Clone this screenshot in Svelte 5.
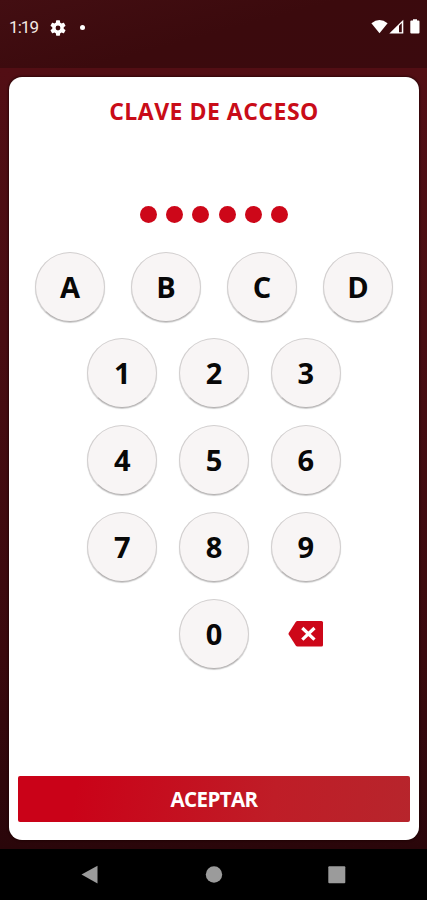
<script>
  const letters = ['A', 'B', 'C', 'D'];
  const rows = [['1', '2', '3'], ['4', '5', '6'], ['7', '8', '9']];
</script>

<div class="screen">
  <header>
    <div class="left">
      <span class="time">1:19</span>
      <svg class="gear" width="16" height="16" viewBox="2 2 20 20"><path fill="#fff" fill-rule="evenodd" d="M19.14 12.94c.04-.3.06-.61.06-.94 0-.32-.02-.64-.07-.94l2.03-1.58a.49.49 0 0 0 .12-.61l-1.92-3.32a.49.49 0 0 0-.59-.22l-2.39.96a7 7 0 0 0-1.62-.94l-.36-2.54a.48.48 0 0 0-.48-.41h-3.84a.48.48 0 0 0-.47.41l-.36 2.54a7.4 7.4 0 0 0-1.62.94l-2.39-.96a.48.48 0 0 0-.59.22L2.74 8.87a.48.48 0 0 0 .12.61l2.03 1.58a7 7 0 0 0 0 1.88l-2.03 1.58a.49.49 0 0 0-.12.61l1.92 3.32c.12.22.37.29.59.22l2.39-.96c.5.38 1.03.7 1.62.94l.36 2.54c.05.24.24.41.48.41h3.84c.24 0 .44-.17.47-.41l.36-2.54a7.4 7.4 0 0 0 1.62-.94l2.39.96c.22.08.47 0 .59-.22l1.92-3.32a.48.48 0 0 0-.12-.61zM12 15a3 3 0 1 1 0-6 3 3 0 0 1 0 6z"/></svg>
      <i class="notice"></i>
    </div>
    <svg class="signals" width="50" height="16" viewBox="0 0 50 16" fill="#fff">
      <path d="M.4 4.2Q8.500-2.200 16.600 4.200L8.500 14.200Z"/>
      <path fill-rule="evenodd" d="M18.300 14.600 32.300.7V14.600ZM28 6.800V13.200H30.800V4Z"/>
      <path d="M28 6.800V13.200H26.800V8Z" opacity=".7"/>
      <path d="M40.300 1.500H42V.3h4v1.200h1.500q1 0 1 1V13.600q0 1-1 1h-7.200q-1 0-1-1V2.500q0-1 1-1Z"/>
    </svg>
  </header>

  <main>
    <section class="card">
      <h1>CLAVE DE ACCESO</h1>
      <div class="pin">
        {#each Array(6) as _}<i></i>{/each}
      </div>
      <div class="pad">
        <div class="row letters">
          {#each letters as key}<button class="key">{key}</button>{/each}
        </div>
        {#each rows as row}
          <div class="row">
            {#each row as key}<button class="key">{key}</button>{/each}
          </div>
        {/each}
        <div class="row">
          <span class="blank"></span>
          <button class="key">0</button>
          <button class="delete" aria-label="Borrar">
            <svg width="36" height="28" viewBox="0 0 36 28">
              <path fill="#cd0719" d="M9.500 1H33.500Q35 1 35 2.500V25Q35 26.500 33.500 26.500H9.500Q8.400 26.500 7.700 25.600L.7 14.500Q.3 13.800.7 13L7.700 2Q8.400 1 9.500 1Z"/>
              <path d="M14.300 8 26.500 19.600M26.500 8 14.300 19.600" stroke="#fff" stroke-width="3.200"/>
            </svg>
          </button>
        </div>
      </div>
      <button class="accept">ACEPTAR</button>
    </section>
  </main>

  <nav>
    <svg width="427" height="51" viewBox="0 0 427 51" fill="#9b9b9b">
      <path d="M81.500 25.500 97.500 16.700V34.500Z"/>
      <circle cx="214" cy="25.500" r="8.200"/>
      <rect x="328.300" y="17.300" width="17" height="17" rx="1"/>
    </svg>
  </nav>
</div>

<style>
  :global(body) { margin: 0; }
  .screen {
    width: 427px;
    height: 900px;
    display: flex;
    flex-direction: column;
    overflow: hidden;
    background: #000;
    font-family: "Open Sans", "Noto Sans", sans-serif;
  }
  header {
    box-sizing: border-box;
    height: 68px;
    padding: 19px 6px 0 9px;
    display: flex;
    justify-content: space-between;
    align-items: flex-start;
    background: linear-gradient(165deg, #430e12, #3b0a0d 50%, #3b0a0e);
  }
  .left { display: flex; align-items: center; height: 17px; }
  .time {
    width: 41px;
    color: #f4e9e4;
    font: 400 17px/17px Roboto, sans-serif;
    letter-spacing: -0.9px;
  }
  .gear { margin-right: 14px; }
  .notice { width: 5px; height: 5px; border-radius: 50%; background: #fff; }
  main {
    box-sizing: border-box;
    height: 781px;
    padding: 8.5px 8px 9px 9px;
    background: linear-gradient(180deg, #520e14, #480d12 35%, #3a090d 75%, #2a060a);
  }
  .card {
    box-sizing: border-box;
    height: 763.5px;
    padding: 0 9px;
    border-radius: 13px;
    background: #fff;
    box-shadow: 0 0 2px 1px rgba(25, 0, 2, .6);
    display: flex;
    flex-direction: column;
    align-items: center;
  }
  h1 {
    margin: 18.500px 0 0;
    height: 32px;
    color: #c90c18;
    font-size: 23px;
    font-weight: 700;
    line-height: 32px;
    letter-spacing: .5px;
    white-space: nowrap;
  }
  .pin { display: flex; gap: 9.100px; margin: 79px 0 0; height: 17px; }
  .pin i { width: 17px; height: 17px; border-radius: 50%; background: #cd0719; }
  .pad { margin-top: 28.500px; display: flex; flex-direction: column; gap: 16.900px; }
  .row { display: flex; justify-content: center; gap: 21.700px; }
  .letters { gap: 26px; }
  button { border: 0; padding: 0; font-family: inherit; }
  .key {
    width: 70px;
    height: 70px;
    border-radius: 50%;
    background: #f8f5f5;
    border: 1px solid #d2cfcf;
    border-bottom-color: #b4b1b1;
    box-shadow: 0 1px 1px rgba(0, 0, 0, .2);
    color: #080808;
    font-size: 29px;
    font-weight: 700;
    line-height: 68px;
  }
  .blank, .delete { width: 70px; height: 70px; }
  .delete { background: none; display: flex; align-items: center; justify-content: center; }
  .accept {
    width: 392px;
    height: 46px;
    margin-top: auto;
    margin-bottom: 18px;
    border-radius: 2px;
    background: linear-gradient(100deg, #ca0218 15%, #bf1d27 65%, #b7252c);
    color: #fff;
    font-size: 20.500px;
    font-weight: 700;
    line-height: 45px;
    letter-spacing: -.6px;
  }
  nav { height: 51px; background: #000; }
  nav svg { display: block; }
</style>
